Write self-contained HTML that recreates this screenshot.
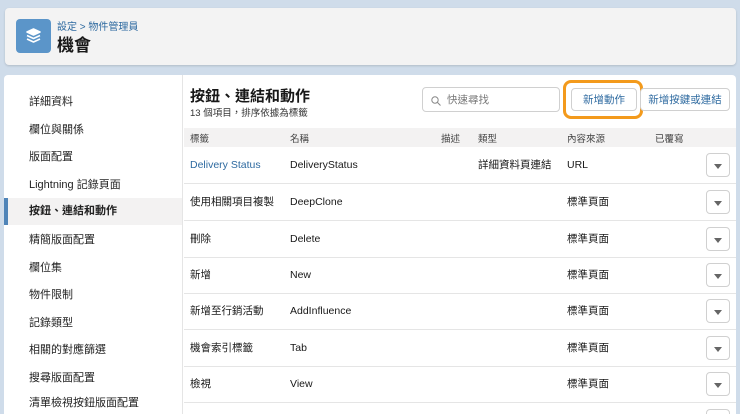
<!DOCTYPE html>
<html><head><meta charset="utf-8"><style>
*{margin:0;padding:0;box-sizing:border-box}
html,body{width:740px;height:414px;overflow:hidden}
body{background:#cfdcea;font-family:"Liberation Sans","Noto Sans CJK TC",sans-serif;color:#181818;position:relative}
.hdr{position:absolute;left:5px;top:8px;width:731px;height:57px;background:#f3f3f3;border-radius:4px;box-shadow:0 1px 2px rgba(0,0,0,.15)}
.icon{position:absolute;left:16px;top:19px;width:35px;height:34px;background:#5b95c9;border-radius:4px}
.crumb{position:absolute;left:57px;top:18px;font-size:10px;color:#2e6aa0}
.title{position:absolute;left:57px;top:31px;font-size:17px;font-weight:bold}
.main{position:absolute;left:4px;top:75px;width:732px;height:339px;background:#fff;border-radius:4px 4px 0 0;overflow:hidden}
.side{position:absolute;left:0;top:0;width:179px;height:339px;border-right:1px solid #e5e5e5;overflow:hidden}
.si{position:absolute;left:0;width:179px;height:27px;line-height:27px;padding-left:25px;font-size:11px;color:#222}
.si.sel{background:#f3f2f2;border-left:4px solid #4f84b8;padding-left:21px;font-weight:bold}
.h2{position:absolute;left:186px;top:10px;font-size:15px;font-weight:bold}
.sub{position:absolute;left:186px;top:30px;font-size:9.5px;color:#333}
.search{position:absolute;left:418px;top:12px;width:138px;height:25px;border:1px solid #d0d0d0;border-radius:4px;font-size:10.5px;color:#777;line-height:25px;padding-left:24px}
.ring{position:absolute;left:559px;top:5px;width:80px;height:39px;border:3px solid #f39a1c;border-radius:8px}
.btn{position:absolute;top:13px;height:23px;border:1px solid #d0d0d0;border-radius:4px;background:#fff;font-size:10.5px;color:#2e6aa0;line-height:23px;text-align:center}
.th{position:absolute;left:180px;top:53px;width:552px;height:19px;background:#f3f2f2;font-size:9.5px;color:#444}
.th span,.row span{position:absolute}
.row{position:absolute;left:180px;width:552px;height:37px;border-bottom:1px solid #e5e5e5;font-size:10.5px;line-height:36px;overflow:hidden}
.dd{position:absolute;left:522px;top:6px;width:24px;height:24px;border:1px solid #d0d0d0;border-radius:4px}
.dd:after{content:"";position:absolute;left:7px;top:10px;border-left:4px solid transparent;border-right:4px solid transparent;border-top:5px solid #666}
</style></head><body>
<div class="hdr"></div>
<div class="icon"><svg width="35" height="34" viewBox="0 0 35 34"><g fill="none" stroke="#fff" stroke-width="1.6" stroke-linejoin="round"><path d="M11 13l6.5-3 6.5 3-6.5 3z" fill="#fff"/><path d="M11 16.5l6.5 3 6.5-3"/><path d="M11 20l6.5 3 6.5-3"/></g></svg></div>
<div class="crumb">設定 &gt; 物件管理員</div>
<div class="title">機會</div>
<div class="main">
<div class="side">
<div class="si" style="top:14px">詳細資料</div>
<div class="si" style="top:42px">欄位與關係</div>
<div class="si" style="top:69px">版面配置</div>
<div class="si" style="top:97px">Lightning 記錄頁面</div>
<div class="si sel" style="top:123px">按鈕、連結和動作</div>
<div class="si" style="top:152px">精簡版面配置</div>
<div class="si" style="top:180px">欄位集</div>
<div class="si" style="top:207px">物件限制</div>
<div class="si" style="top:235px">記錄類型</div>
<div class="si" style="top:262px">相關的對應篩選</div>
<div class="si" style="top:290px">搜尋版面配置</div>
<div class="si" style="top:317px;height:22px;line-height:22px">清單檢視按鈕版面配置</div>
</div>
<div class="h2">按鈕、連結和動作</div>
<div class="sub">13 個項目，排序依據為標籤</div>
<div class="search"><svg style="position:absolute;left:8px;top:8px" width="10" height="10" viewBox="0 0 10 10"><circle cx="4" cy="4" r="3.2" fill="none" stroke="#888" stroke-width="1"/><path d="M6.4 6.4L9.5 9.5" stroke="#888"/></svg>快速尋找</div>
<div class="ring"></div>
<div class="btn" style="left:567px;width:66px">新增動作</div>
<div class="btn" style="left:636px;width:90px">新增按鍵或連結</div>
<div class="th"><span style="left:6px;top:3px">標籤</span><span style="left:106px;top:3px">名稱</span><span style="left:257px;top:3px">描述</span><span style="left:294px;top:3px">類型</span><span style="left:383px;top:3px">內容來源</span><span style="left:471px;top:3px">已覆寫</span></div>
<div class="row" style="top:72px"><span style="left:6px;color:#2e6aa0">Delivery Status</span><span style="left:106px">DeliveryStatus</span><span style="left:294px">詳細資料頁連結</span><span style="left:383px">URL</span><div class="dd"></div></div>
<div class="row" style="top:109px"><span style="left:6px">使用相關項目複製</span><span style="left:106px">DeepClone</span><span style="left:383px">標準頁面</span><div class="dd"></div></div>
<div class="row" style="top:146px"><span style="left:6px">刪除</span><span style="left:106px">Delete</span><span style="left:383px">標準頁面</span><div class="dd"></div></div>
<div class="row" style="top:182px"><span style="left:6px">新增</span><span style="left:106px">New</span><span style="left:383px">標準頁面</span><div class="dd"></div></div>
<div class="row" style="top:218px"><span style="left:6px">新增至行銷活動</span><span style="left:106px">AddInfluence</span><span style="left:383px">標準頁面</span><div class="dd"></div></div>
<div class="row" style="top:255px"><span style="left:6px">機會索引標籤</span><span style="left:106px">Tab</span><span style="left:383px">標準頁面</span><div class="dd"></div></div>
<div class="row" style="top:291px"><span style="left:6px">檢視</span><span style="left:106px">View</span><span style="left:383px">標準頁面</span><div class="dd"></div></div>
<div class="row" style="top:328px;height:11px;border-bottom:0"><div class="dd"></div></div>
</div>
</body></html>
